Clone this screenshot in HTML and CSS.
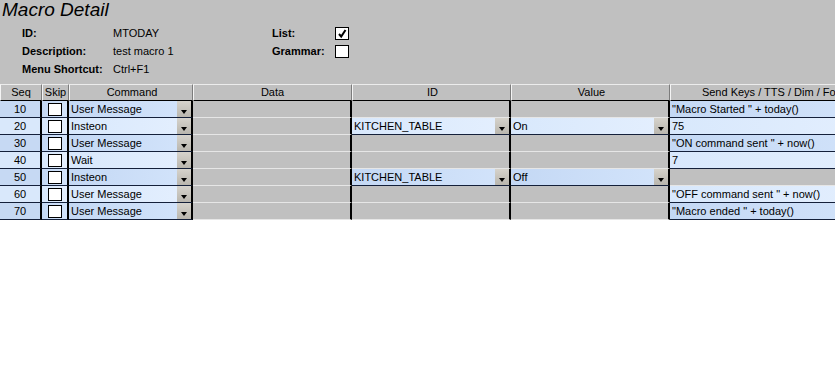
FILE: index.html
```html
<!DOCTYPE html>
<html>
<head>
  <title>Macro Detail</title>
  <link rel="stylesheet" href="styles.css">
</head>
<body>

  <header class="panel">
    <h1 class="title">Macro Detail</h1>
    <div class="info">
      <span class="lbl">ID:</span>
      <span class="val">MTODAY</span>
      <span class="lbl">List:</span>
      <span class="chk">
        <svg width="12" height="11" viewBox="0 0 12 11"><path d="M3 6 L5.2 8.5 L9.5 2" fill="none" stroke="#000" stroke-width="2"/></svg>
      </span>

      <span class="lbl">Description:</span>
      <span class="val">test macro 1</span>
      <span class="lbl">Grammar:</span>
      <span class="chk"></span>

      <span class="lbl">Menu Shortcut:</span>
      <span class="val">Ctrl+F1</span>
    </div>
  </header>

  <section class="grid">
    <div class="row head">
      <div class="c-seq">Seq</div>
      <div class="c-skip">Skip</div>
      <div class="c-cmd">Command</div>
      <div class="c-data">Data</div>
      <div class="c-id">ID</div>
      <div class="c-val">Value</div>
      <div class="c-keys">Send Keys / TTS / Dim / Formula</div>
    </div>

    <div class="row odd">
      <div class="c-seq">10</div>
      <div class="c-skip"><span class="box"></span></div>
      <div class="c-cmd combo">User Message<span class="drop"></span></div>
      <div class="c-data off"></div>
      <div class="c-id off"></div>
      <div class="c-val off"></div>
      <div class="c-keys">"Macro Started " + today()</div>
    </div>

    <div class="row even">
      <div class="c-seq">20</div>
      <div class="c-skip"><span class="box"></span></div>
      <div class="c-cmd combo">Insteon<span class="drop"></span></div>
      <div class="c-data off"></div>
      <div class="c-id combo">KITCHEN_TABLE<span class="drop"></span></div>
      <div class="c-val combo">On<span class="drop"></span></div>
      <div class="c-keys">75</div>
    </div>

    <div class="row odd">
      <div class="c-seq">30</div>
      <div class="c-skip"><span class="box"></span></div>
      <div class="c-cmd combo">User Message<span class="drop"></span></div>
      <div class="c-data off"></div>
      <div class="c-id off"></div>
      <div class="c-val off"></div>
      <div class="c-keys">"ON command sent " + now()</div>
    </div>

    <div class="row even">
      <div class="c-seq">40</div>
      <div class="c-skip"><span class="box"></span></div>
      <div class="c-cmd combo">Wait<span class="drop"></span></div>
      <div class="c-data off"></div>
      <div class="c-id off"></div>
      <div class="c-val off"></div>
      <div class="c-keys">7</div>
    </div>

    <div class="row odd">
      <div class="c-seq">50</div>
      <div class="c-skip"><span class="box"></span></div>
      <div class="c-cmd combo">Insteon<span class="drop"></span></div>
      <div class="c-data off"></div>
      <div class="c-id combo">KITCHEN_TABLE<span class="drop"></span></div>
      <div class="c-val combo">Off<span class="drop"></span></div>
      <div class="c-keys off"></div>
    </div>

    <div class="row even">
      <div class="c-seq">60</div>
      <div class="c-skip"><span class="box"></span></div>
      <div class="c-cmd combo">User Message<span class="drop"></span></div>
      <div class="c-data off"></div>
      <div class="c-id off"></div>
      <div class="c-val off"></div>
      <div class="c-keys">"OFF command sent " + now()</div>
    </div>

    <div class="row odd">
      <div class="c-seq">70</div>
      <div class="c-skip"><span class="box"></span></div>
      <div class="c-cmd combo">User Message<span class="drop"></span></div>
      <div class="c-data off"></div>
      <div class="c-id off"></div>
      <div class="c-val off"></div>
      <div class="c-keys">"Macro ended " + today()</div>
    </div>
  </section>

</body>
</html>
```

FILE: styles.css
```css
body {
  font-family: "Liberation Sans", Arial, sans-serif;
  font-size: 11px;
  background-color: white;
  color: black;
  margin: 0;
  padding: 0;
}

.panel {
  background-color: #c0c0c0;
  height: 84px;
}

.title {
  margin: 0 0 4px 2px;
  font-size: 19px;
  font-style: italic;
  font-weight: normal;
  line-height: 20px;
}

.info {
  display: grid;
  grid-template-columns: 91px 159px 63px 16px;
  grid-auto-rows: 18px;
  padding-left: 22px;
  line-height: 18px;
}

.lbl {
  font-weight: bold;
}

.chk {
  align-self: center;
  width: 14px;
  height: 13px;
  box-sizing: border-box;
  border: 1px solid #000;
  background-color: white;
  display: flex;
  align-items: center;
  justify-content: center;
}

/* table */

.grid {
  overflow: hidden;
}

.row {
  display: flex;
  width: 892px;
  height: 17px;
}

.row > div {
  box-sizing: border-box;
  height: 17px;
  border-right: 2px solid #000;
  border-bottom: 1px solid #14203a;
  line-height: 17px;
  white-space: nowrap;
  overflow: hidden;
  position: relative;
}

.c-seq { width: 42px; text-align: center; }
.c-skip { width: 27px; }
.c-cmd { width: 124px; }
.c-data, .c-id, .c-val { width: 159px; }
.c-keys { width: 222px; }

.row > .c-keys {
  border-right: none;
}

.head > div {
  height: 17px;
  text-align: center;
  line-height: 15px;
  background-color: #c0c0c0;
  border-top: 1px solid #ececec;
  border-left: 1px solid #f4f4f4;
  border-right: 1px solid #7c7c7c;
  border-bottom: 1px solid #000;
}

.head > .c-keys {
  border-right: none;
}

.odd > div {
  background: linear-gradient(to right, #c4d8f4, #d3e4fb);
}

.even > div {
  background: linear-gradient(to right, #d8e8fc, #e4effe);
}

.odd > .c-seq {
  background: #c6d9f3;
}

.even > .c-seq {
  background: #d9e8fb;
}

.row > .off {
  background: #c0c0c0;
  border-bottom-color: #e6e6e6;
}

.c-cmd,
.c-id,
.c-val,
.c-keys {
  padding-left: 2px;
}

.c-skip {
  display: flex;
  justify-content: center;
}

.box {
  width: 14px;
  height: 13px;
  margin-top: 2px;
  box-sizing: border-box;
  border: 1px solid #000;
  background-color: white;
}

.drop {
  position: absolute;
  top: 0;
  right: 0;
  width: 14px;
  height: 16px;
  background: linear-gradient(#d6d3cc, #b9b6ae);
}

.drop::after {
  content: "";
  position: absolute;
  left: 4px;
  top: 9px;
  border-left: 3.5px solid transparent;
  border-right: 3.5px solid transparent;
  border-top: 4px solid #000;
}
```
